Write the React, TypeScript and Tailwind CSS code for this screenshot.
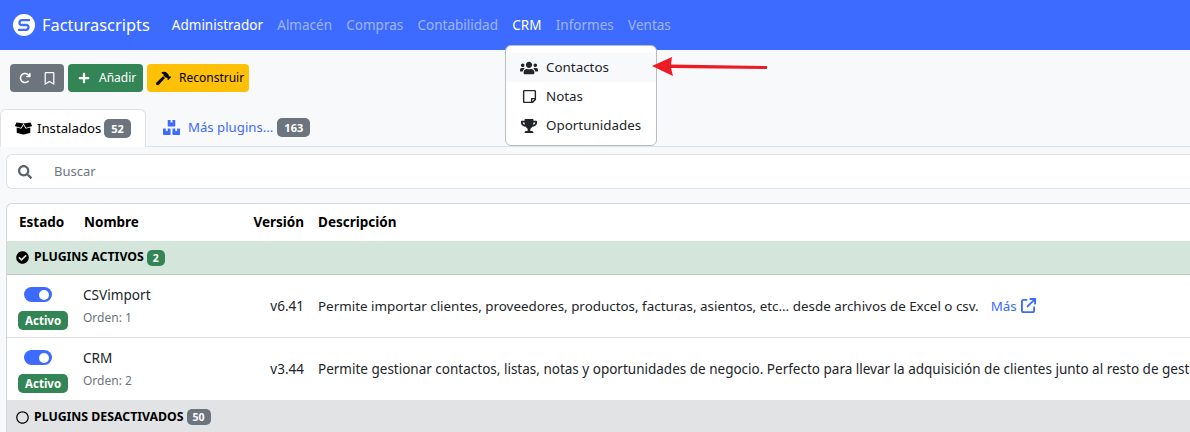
import React from "react";
import {
  FaBoxes,
  FaBoxOpen,
  FaCheckCircle,
  FaHammer,
  FaPlus,
  FaRegBookmark,
  FaRegCircle,
  FaRegStickyNote,
  FaSearch,
  FaTrophy,
  FaUsers,
} from "react-icons/fa";
import { FaArrowRotateRight, FaArrowUpRightFromSquare } from "react-icons/fa6";

const navItems = ["Almacén", "Compras", "Contabilidad"];
const navItemsAfter = ["Informes", "Ventas"];

function Logo() {
  return (
    <svg width="22" height="22" viewBox="0 0 22 22" className="shrink-0">
      <circle cx="11" cy="11" r="11" fill="white" />
      {/* two hooks of the S, with a small gap in the middle */}
      <path d="M16 6.2 H9 C6.2 6.2 5.6 10 8 11" fill="none" stroke="#3d6bff" strokeWidth="2.3" strokeLinecap="round" />
      <path d="M6 15.8 H13 C15.8 15.8 16.4 12 14 11 H9.5" fill="none" stroke="#3d6bff" strokeWidth="2.3" strokeLinecap="round" />
    </svg>
  );
}

function Toggle() {
  return (
    <div className="ml-[17px] flex h-[15px] w-[28px] items-center justify-end rounded-full bg-[#3d6bff] px-[3px]">
      <div className="h-[10px] w-[10px] rounded-full bg-white" />
    </div>
  );
}

function PluginRow({ name, order, version, last, children }: { name: string; order: number; version: string; last?: boolean; children: React.ReactNode }) {
  return (
    <div className={`flex items-center bg-white ${last ? "h-[62px]" : "h-[63px] border-b border-[#dee2e6]"}`}>
      <div className="flex w-[70px] shrink-0 flex-col items-start gap-[9px] pt-[5px]">
        <Toggle />
        <span className="ml-[11px] rounded-[5px] bg-[#348555] px-[7px] py-[2px] text-[11.5px] leading-[15px] font-bold text-white">Activo</span>
      </div>
      <div className="w-[170px] shrink-0 pl-[6px]">
        <div className="text-[13.6px] leading-[20px] text-[#212529]">{name}</div>
        <div className="mt-[3px] text-[12px] leading-[20px] text-[#6c757d]">Orden: {order}</div>
      </div>
      <div className="w-[57px] shrink-0 text-right text-[13.5px] text-[#212529]">{version}</div>
      <div className="pl-[14px] text-[13.4px] whitespace-nowrap text-[#212529]">{children}</div>
    </div>
  );
}

export default function App() {
  return (
    <div className="relative h-[432px] w-[1190px] overflow-hidden bg-[#f8f9fa] font-['Noto_Sans',sans-serif] text-[14px] text-[#212529]">
      {/* Navbar */}
      <nav className="flex h-[50px] items-center bg-[#3d6bff] pl-[13px]">
        <Logo />
        <span className="ml-[7px] text-[16.4px] text-white">Facturascripts</span>
        <div className="ml-[22px] flex items-center gap-[14.3px] text-[13.5px]">
          <span className="text-white">Administrador</span>
          {navItems.map((item) => (
            <span key={item} className="text-white/50">{item}</span>
          ))}
          <span className="text-white">CRM</span>
          {navItemsAfter.map((item) => (
            <span key={item} className="text-white/50">{item}</span>
          ))}
        </div>
      </nav>

      {/* Toolbar */}
      <div className="flex gap-[4px] pl-[10px] pt-[14px]">
        <div className="flex h-[28px] w-[54px] items-center justify-between rounded-[4px] bg-[#6c757d] pr-[8px] pl-[9px] text-white">
          <FaArrowRotateRight size={12} />
          <FaRegBookmark size={13} />
        </div>
        <div className="flex h-[28px] w-[75px] items-center gap-[9px] rounded-[4px] bg-[#348555] pl-[10px] text-[12px] text-white">
          <FaPlus size={12} />
          <span>Añadir</span>
        </div>
        <div className="flex h-[28px] w-[102px] items-center gap-[8px] rounded-[4px] bg-[#ffc107] pl-[9px] text-[12px] text-black">
          <FaHammer size={15} />
          <span>Reconstruir</span>
        </div>
      </div>

      {/* Tabs */}
      <div className="mt-[17px] flex h-[38px] items-stretch border-b border-[#dee2e6]">
        <div className="-mb-[1px] flex w-[146px] items-center rounded-t-[6px] border border-b-0 border-[#dee2e6] bg-white pl-[14px]">
          <FaBoxOpen size={17} className="text-black" />
          <span className="ml-[5px] text-[13.2px] text-black">Instalados</span>
          <span className="ml-[3px] rounded-[5px] bg-[#6c757d] px-[7px] py-[2px] text-[11px] leading-[15px] font-bold text-white">52</span>
        </div>
        <div className="flex items-center pl-[17px] text-[#3d6bff]">
          <FaBoxes size={17} />
          <span className="ml-[8px] text-[13.2px]">Más plugins...</span>
          <span className="ml-[4px] rounded-[5px] bg-[#6c757d] px-[7px] py-[2px] text-[11px] leading-[15px] font-bold text-white">163</span>
        </div>
      </div>

      {/* Search */}
      <div className="mt-[7px] ml-[6px] flex h-[35px] items-center rounded-l-[6px] border border-r-0 border-[#dee2e6] bg-white pl-[11px]">
        <FaSearch size={14} className="text-[#5c636a]" />
        <span className="ml-[22px] pt-[1px] text-[13px] text-[#6c757d]">Buscar</span>
      </div>

      {/* Table */}
      <div className="mt-[14px] ml-[6px] rounded-tl-[6px] border-t border-l border-[#d5d7da] bg-white">
        <div className="flex h-[37px] items-center text-[13.5px] font-bold text-black">
          <div className="w-[70px] pl-[12px]">Estado</div>
          <div className="w-[170px] pl-[7px]">Nombre</div>
          <div className="w-[57px] text-right">Versión</div>
          <div className="pl-[14px]">Descripción</div>
        </div>
        <div className="flex h-[34px] items-center border-b border-[#b9c9bf] bg-[#d4e6dc] pl-[9px] text-[12.3px] font-bold text-black">
          <FaCheckCircle size={13} />
          <span className="ml-[5px]">PLUGINS ACTIVOS</span>
          <span className="ml-[3px] rounded-[5px] bg-[#348555] px-[6px] text-[10.5px] leading-[16px] text-white">2</span>
        </div>
        <PluginRow name="CSVimport" order={1} version="v6.41">
          Permite importar clientes, proveedores, productos, facturas, asientos, etc... desde archivos de Excel o csv.
          <span className="ml-[12px] inline-flex items-center gap-[4px] text-[#3d6bff]">
            Más <FaArrowUpRightFromSquare size={15} />
          </span>
        </PluginRow>
        <PluginRow name="CRM" order={2} version="v3.44" last>
          <span className="text-[13.5px]">
            Permite gestionar contactos, listas, notas y oportunidades de negocio. Perfecto para llevar la adquisición de clientes junto al resto de gestión.
          </span>
        </PluginRow>
        <div className="flex h-[34px] items-center bg-[#e2e3e5] pl-[9px] text-[12.3px] font-bold text-black">
          <FaRegCircle size={13} />
          <span className="ml-[5px]">PLUGINS DESACTIVADOS</span>
          <span className="ml-[3px] rounded-[5px] bg-[#6c757d] px-[6px] text-[10.5px] leading-[16px] font-bold text-white">50</span>
        </div>
      </div>

      {/* CRM dropdown */}
      <div className="absolute top-[45px] left-[505px] w-[152px] rounded-[6px] border border-[#b9bcc0] bg-white pt-[7px] pb-[5px] text-[13.4px] text-[#212529]">
        <div className="flex h-[29px] items-center gap-[8px] bg-[#f8f9fa] pl-[14px]">
          <span className="flex w-[18px] justify-center"><FaUsers size={18} /></span>
          <span>Contactos</span>
        </div>
        <div className="flex h-[29px] items-center gap-[8px] pl-[14px]">
          <span className="flex w-[18px] justify-center"><FaRegStickyNote size={15} /></span>
          <span>Notas</span>
        </div>
        <div className="flex h-[29px] items-center gap-[8px] pl-[14px]">
          <span className="flex w-[18px] justify-center"><FaTrophy size={16} /></span>
          <span>Oportunidades</span>
        </div>
      </div>

      {/* Red arrow annotation */}
      <svg className="absolute top-[56px] left-[650px]" width="120" height="21" viewBox="0 0 120 21">
        <path d="M2 10 L22 1 L21 8.5 L117 10 V13 L21 12 L23 20 Z" fill="#ed1c24" />
      </svg>
    </div>
  );
}
